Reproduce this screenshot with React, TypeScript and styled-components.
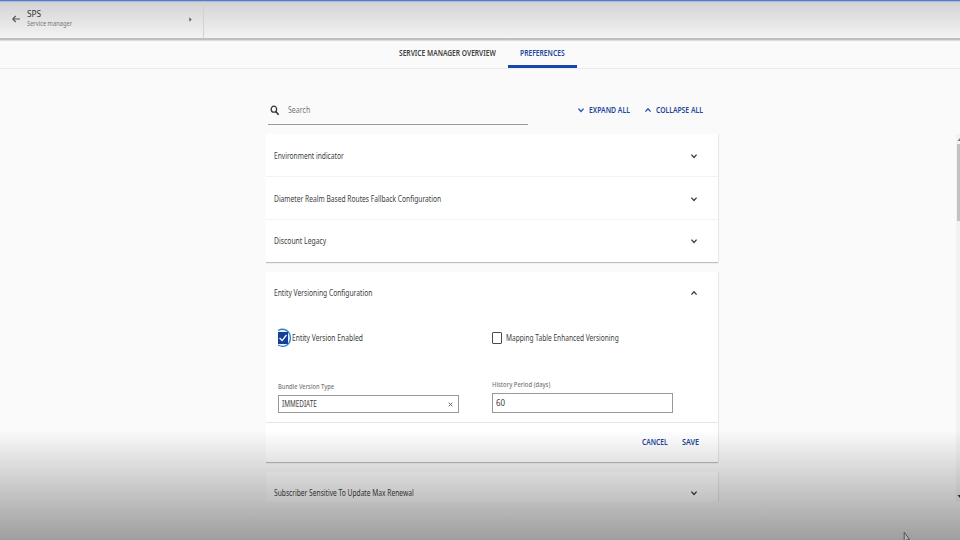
import React, { useLayoutEffect, useRef, useState } from "react";
import styled, { createGlobalStyle, css } from "styled-components";

const GlobalStyle = createGlobalStyle`
  * { box-sizing: border-box; }
  html, body { margin: 0; padding: 0; }
  body { width: 960px; height: 540px; overflow: hidden; background: #fafafa; font-family: "Noto Sans", sans-serif; color: #454545; }
  button, input { font: inherit; color: inherit; border: 0; background: none; padding: 0; margin: 0; }
`;

const blue = "#1d479c";

/* Narrow label: the glyphs are condensed so the text takes a given width. */
const TextBox = styled.span<{ $w: number }>`
  display: block;
  flex: none;
  width: ${(p) => p.$w}px;
  white-space: nowrap;
  overflow: visible;
`;
const TextInner = styled.span<{ $size: number; $weight: number; $color: string }>`
  display: block;
  width: max-content;
  transform-origin: 0 50%;
  font-size: ${(p) => p.$size}px;
  font-weight: ${(p) => p.$weight};
  line-height: 12px;
  color: ${(p) => p.$color};
`;

type LabelProps = { children: string; w: number; size?: number; weight?: number; color?: string };

function Label({ children, w, size = 8, weight = 400, color = "#404040" }: LabelProps) {
  const ref = useRef<HTMLSpanElement>(null);
  const [scale, setScale] = useState(1);
  useLayoutEffect(() => {
    if (ref.current) setScale(w / ref.current.offsetWidth);
  }, [w, children]);
  return (
    <TextBox $w={w}>
      <TextInner ref={ref} $size={size} $weight={weight} $color={color} style={{ transform: `scaleX(${scale})` }}>
        {children}
      </TextInner>
    </TextBox>
  );
}

const Page = styled.div`
  position: relative;
  width: 960px;
  height: 540px;
  overflow: hidden;
  background: #fafafa;
  display: flex;
  flex-direction: column;
`;
const Header = styled.header`
  flex: none;
  height: 40px;
  border-top: 1px solid #4f7bd0;
  background: linear-gradient(#8fa6d2 0, #cfcfcf 1px, #d5d5d5 3px, #f3f3f3 37px);
  border-bottom: 2px solid #c0c0c0;
  box-shadow: 0 1px 1px #dedede;
  display: flex;
`;
const Context = styled.div`
  width: 204px;
  border-right: 1px solid #d2d2d2;
  display: flex;
  padding: 0 11px 0 12px;
`;
const BackIcon = styled.svg`
  width: 8px;
  height: 8px;
  margin: 14px 7px 0 0;
`;
const Titles = styled.div`
  padding-top: 7px;
  flex: 1;
  > * + * { margin-top: -2px; }
`;
const MenuArrow = styled.svg`
  width: 3px;
  height: 5px;
  margin-top: 16px;
`;
const Tabs = styled.nav`
  flex: none;
  height: 29px;
  padding-left: 387px;
  display: flex;
  border-bottom: 1px solid #ececec;
`;
const Tab = styled.button<{ $active?: boolean }>`
  display: flex;
  padding: 7px 12px 0;
  height: 28px;
  ${(p) => p.$active && css`border-bottom: 3px solid #1747ad;`}
`;
const Body = styled.main`
  width: 452px;
  height: 433px;
  margin-left: 266px;
  overflow: visible;
`;
const Tools = styled.div`
  height: 65px;
  padding: 26px 0 0 2px;
  display: flex;
`;
const SearchField = styled.div`
  width: 260px;
  height: 30px;
  border-bottom: 1px solid #999;
  display: flex;
  padding: 9px 0 0 2px;
  gap: 8px;
`;
const SearchIcon = styled.svg`
  width: 10px;
  height: 11px;
  margin-top: 1px;
`;
const Action = styled.button<{ $left: number }>`
  display: flex;
  height: 12px;
  margin: 9px 0 0 ${(p) => p.$left}px;
  gap: 4px;
`;
const ChevronSvg = styled.svg`
  width: 8px;
  height: 12px;
  flex: none;
`;
const Viewport = styled.div`
  height: 368px;
  overflow: hidden;
  width: 456px;
  padding: 0 3px 0 0;
  margin-right: -4px;
`;
const Panel = styled.section`
  width: 452px;
  background: #fff;
  box-shadow: 0 1px 1px #bdbdbd, 1px 0 1px #f0f0f0;
  margin-bottom: 10px;
`;
const Row = styled.div<{ $line?: boolean; $top?: number; $h?: number }>`
  height: ${(p) => p.$h ?? 43}px;
  padding: ${(p) => p.$top ?? 15}px 20px 0 8px;
  display: flex;
  align-items: flex-start;
  justify-content: space-between;
  ${(p) => p.$line && css`border-bottom: 1px solid #f3f3f3;`}
`;
const Form = styled.div`
  height: 107px;
  padding: 17px 0 0 12px;
  display: grid;
  grid-template-columns: 214px 181px;
  grid-template-rows: 47px 40px;
`;
const Check = styled.label<{ $gap: number }>`
  display: flex;
  height: 12px;
  gap: ${(p) => p.$gap}px;
`;
const CheckSvg = styled.svg`
  width: 14px;
  height: 22px;
  margin: -5px 0 0 0;
  overflow: visible;
`;
const EmptyBox = styled.span`
  width: 10px;
  height: 12px;
  border: 1px solid #4b4b4b;
  border-radius: 1px;
`;
const Field = styled.div<{ $top: number }>`
  width: 181px;
  padding-top: ${(p) => p.$top}px;
`;
const Control = styled.div<{ $h: number }>`
  height: ${(p) => p.$h}px;
  margin-top: 2px;
  padding: 0 5px 0 3px;
  border: 1px solid #999;
  display: flex;
  align-items: center;
  justify-content: space-between;
`;
const Clear = styled.svg`
  width: 5px;
  height: 5px;
`;
const Footer = styled.footer`
  height: 40px;
  border-top: 1px solid #e3e3e3;
  display: flex;
  justify-content: flex-end;
  gap: 14px;
  padding: 13px 19px 0 0;
`;
const Shade = styled.div`
  position: absolute;
  inset: 430px 0 0 0;
  background: linear-gradient(rgba(0,0,0,0) 0, rgba(0,0,0,.105) 28%, rgba(0,0,0,.24) 64%, rgba(0,0,0,.37) 100%);
  pointer-events: none;
`;
const Scrollbar = styled.div`
  position: absolute;
  right: 0;
  top: 134px;
  width: 4px;
  height: 368px;
  background: #f2f2f2;
  display: flex;
  flex-direction: column;
  justify-content: space-between;
  overflow: hidden;
`;
const Thumb = styled.div`
  height: 77px;
  margin: 1px 0 auto 1px;
  background: #c1c1c1;
`;
const BarArrow = styled.svg`
  width: 4px;
  height: 9px;
  flex: none;
`;
const Cursor = styled.svg`
  position: absolute;
  left: 903px;
  top: 531px;
  width: 8px;
  height: 12px;
`;

function Chevron({ up, color = "#3d3d3d" }: { up?: boolean; color?: string }) {
  return (
    <ChevronSvg viewBox="0 0 8 12" fill="none" stroke={color} strokeWidth="1.35">
      <path d={up ? "M1.4 7.6 4 4.7l2.6 2.9" : "M1.4 4.6 4 7.5l2.6-2.9"} />
    </ChevronSvg>
  );
}

export default function App() {
  return (
    <>
      <GlobalStyle />
      <Page>
        <Header>
          <Context>
            <BackIcon viewBox="0 0 8 8" fill="none" stroke="#555" strokeWidth="1.1">
              <path d="M8 4H1M3.7 1 .8 4l2.9 3" />
            </BackIcon>
            <Titles>
              <Label w={14} size={9.5} color="#333">SPS</Label>
              <Label w={45} size={7} color="#777">Service manager</Label>
            </Titles>
            <MenuArrow viewBox="0 0 3 5"><path d="M.4.3v4.4L2.6 2.5z" fill="#555" /></MenuArrow>
          </Context>
        </Header>
        <Tabs>
          <Tab><Label w={97} size={8.5} weight={600}>SERVICE MANAGER OVERVIEW</Label></Tab>
          <Tab $active><Label w={45} size={8.5} weight={600} color={blue}>PREFERENCES</Label></Tab>
        </Tabs>
        <Body>
          <Tools>
            <SearchField>
              <SearchIcon viewBox="0 0 10 11" fill="none" stroke="#333">
                <ellipse cx="3.9" cy="4.2" rx="2.7" ry="3" strokeWidth="1.3" />
                <path d="m5.8 6.5 2.8 3.3" strokeWidth="1.6" />
              </SearchIcon>
              <Label w={22} color="#777">Search</Label>
            </SearchField>
            <Action $left={49}><Chevron color="#2454ad" /><Label w={41} size={8.5} weight={600} color={blue}>EXPAND ALL</Label></Action>
            <Action $left={14}><Chevron up color="#2454ad" /><Label w={47} size={8.5} weight={600} color={blue}>COLLAPSE ALL</Label></Action>
          </Tools>
          <Viewport>
            <Panel>
              <Row $line $top={16}><Label w={70}>Environment indicator</Label><Chevron /></Row>
              <Row $line $top={16}><Label w={167}>Diameter Realm Based Routes Fallback Configuration</Label><Chevron /></Row>
              <Row $h={42}><Label w={52}>Discount Legacy</Label><Chevron /></Row>
            </Panel>
            <Panel>
              <Row><Label w={98}>Entity Versioning Configuration</Label><Chevron up /></Row>
              <Form>
                <Check $gap={0}>
                  <CheckSvg viewBox="0 0 14 22">
                    <path d="M0 3.5C6 .2 12.4 4 12.4 11S6 21.2 0 18" fill="#eaf4fc" stroke="#2f83c9" strokeWidth="1.3" />
                    <rect y="5" width="10" height="12" fill="#153e99" />
                    <path d="m1.6 11 2.5 2.6L8.5 8" fill="none" stroke="#fff" strokeWidth="1.3" />
                  </CheckSvg>
                  <Label w={71}>Entity Version Enabled</Label>
                </Check>
                <Check $gap={4}><EmptyBox /><Label w={113}>Mapping Table Enhanced Versioning</Label></Check>
                <Field $top={2}>
                  <Label w={56} size={7} weight={500} color="#777">Bundle Version Type</Label>
                  <Control $h={18}>
                    <Label w={35}>IMMEDIATE</Label>
                    <Clear viewBox="0 0 5 5"><path d="m.7.7 3.6 3.6m0-3.6L.7 4.3" stroke="#555" strokeWidth=".9" /></Clear>
                  </Control>
                </Field>
                <Field $top={0}>
                  <Label w={58} size={7} weight={500} color="#777">History Period (days)</Label>
                  <Control $h={20}><Label w={9}>60</Label></Control>
                </Field>
              </Form>
              <Footer>
                <Label w={26} size={8.5} weight={600} color={blue}>CANCEL</Label>
                <Label w={17} size={8.5} weight={600} color={blue}>SAVE</Label>
              </Footer>
            </Panel>
            <Panel>
              <Row><Label w={140}>Subscriber Sensitive To Update Max Renewal</Label><Chevron /></Row>
            </Panel>
          </Viewport>
        </Body>
        <Scrollbar>
          <BarArrow viewBox="0 0 4 9"><path d="M1.5 7 4 4v3z" fill="#777" /></BarArrow>
          <Thumb />
          <BarArrow viewBox="0 0 4 9"><path d="M1.5 2H4v3z" fill="#333" /></BarArrow>
        </Scrollbar>
        <Shade />
        <Cursor viewBox="0 0 8 12"><path d="M1.2 1v10l2.2-2.2h3.2z" fill="#b5b5b5" stroke="#555" /></Cursor>
      </Page>
    </>
  );
}
